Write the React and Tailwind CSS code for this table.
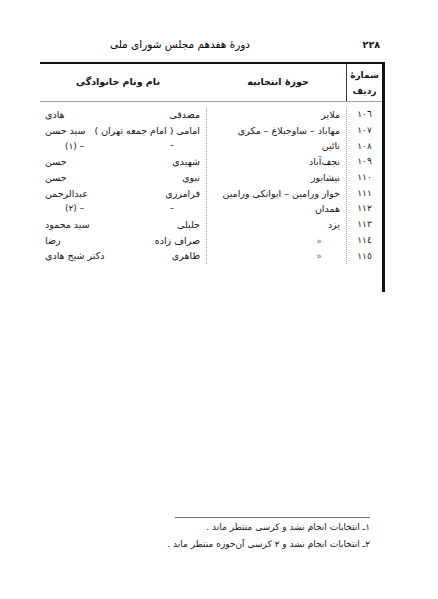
import React from 'react';

const rows = [
  { n: '١٠٦', area: 'ملایر', last: 'مصدقی', first: 'هادی' },
  { n: '١٠٧', area: 'مهاباد – ساوجبلاغ – مکری', last: 'امامی ( امام جمعه تهران )', first: 'سید حسن' },
  { n: '١٠٨', area: 'نائین', last: '–', first: '– (١)', dash: true },
  { n: '١٠٩', area: 'نجف‌آباد', last: 'شهیدی', first: 'حسن' },
  { n: '١١٠', area: 'نیشابور', last: 'نبوی', first: 'حسن' },
  { n: '١١١', area: 'خوار ورامین – ایوانکی ورامین', last: 'فرامرزی', first: 'عبدالرحمن' },
  { n: '١١٢', area: 'همدان', last: '–', first: '– (٢)', dash: true },
  { n: '١١٣', area: 'یزد', last: 'جلیلی', first: 'سید محمود' },
  { n: '١١٤', area: '«', last: 'صراف زاده', first: 'رضا', ditto: true },
  { n: '١١٥', area: '«', last: 'طاهری', first: 'دکتر شیخ هادی', ditto: true },
];

const App = () => {
  return (
    <div dir="rtl" className="w-[438px] h-[599px] bg-white text-[#161616] overflow-hidden" style={{ fontFamily: '"DejaVu Sans", sans-serif' }}>
      {/* page header */}
      <div className="flex items-center h-[20px] mt-[35px] pr-[58px]">
        <span className="w-[24px] text-[9.5px] font-bold">٢٢٨</span>
        <span className="mr-[106px] text-[10.5px] text-black">دورهٔ هفدهم مجلس شورای ملی</span>
      </div>

      {/* table */}
      <div className="mr-[53px] mt-[7px] w-[345px] border-t-[2px] border-r-[3px] border-[#111]">
        {/* head */}
        <div className="flex h-[38px] border-b border-gray-400">
          <div className="w-[36px] flex flex-col items-center justify-center text-[9px] font-bold leading-[16px] border-l border-[#333]">
            <span>شمارهٔ</span>
            <span>ردیف</span>
          </div>
          <div className="w-[140px] flex items-center justify-center text-[9.5px] font-bold pl-[4px]">حوزهٔ انتخابیه</div>
          <div className="flex-1 flex items-center justify-center text-[9.5px] font-bold pr-[10px]">نام ونام خانوادگی</div>
        </div>

        {/* body */}
        <div className="flex pt-[5px] pb-[28px]">
          <div className="w-[36px] border-l border-dotted border-gray-400">
            {rows.map((r) => (
              <div key={r.n} className="h-[15.7px] flex items-center justify-center text-[9px] leading-none">{r.n}</div>
            ))}
          </div>
          <div className="w-[140px] border-l border-dotted border-gray-400">
            {rows.map((r) => (
              <div key={r.n} className={`h-[15.7px] flex items-center text-[9.5px] leading-none whitespace-nowrap ${r.ditto ? 'pr-[24px] text-gray-500' : 'pr-[6px]'}`}>{r.area}</div>
            ))}
          </div>
          <div className="flex-1">
            {rows.map((r) => (
              <div key={r.n} className="h-[15.7px] flex items-center justify-between text-[9.5px] leading-none whitespace-nowrap pr-[6px] pl-[5px]">
                <span className={r.dash ? 'mr-[26px] text-[8px]' : ''}>{r.last}</span>
                <span className={r.dash ? 'ml-[20px] text-[9px]' : ''}>{r.first}</span>
              </div>
            ))}
          </div>
        </div>
      </div>

      {/* footnotes */}
      <div className="mt-[225px] mr-[68px] w-[195px] border-t border-gray-500 pt-[1px] text-[9px] leading-[17px] whitespace-nowrap">
        <div>١ـ انتخابات انجام نشد و کرسی منتظر ماند .</div>
        <div>٢ـ انتخابات انجام نشد و ٢ کرسی آن‌حوزه منتظر ماند .</div>
      </div>
    </div>
  );
};

export default App;
